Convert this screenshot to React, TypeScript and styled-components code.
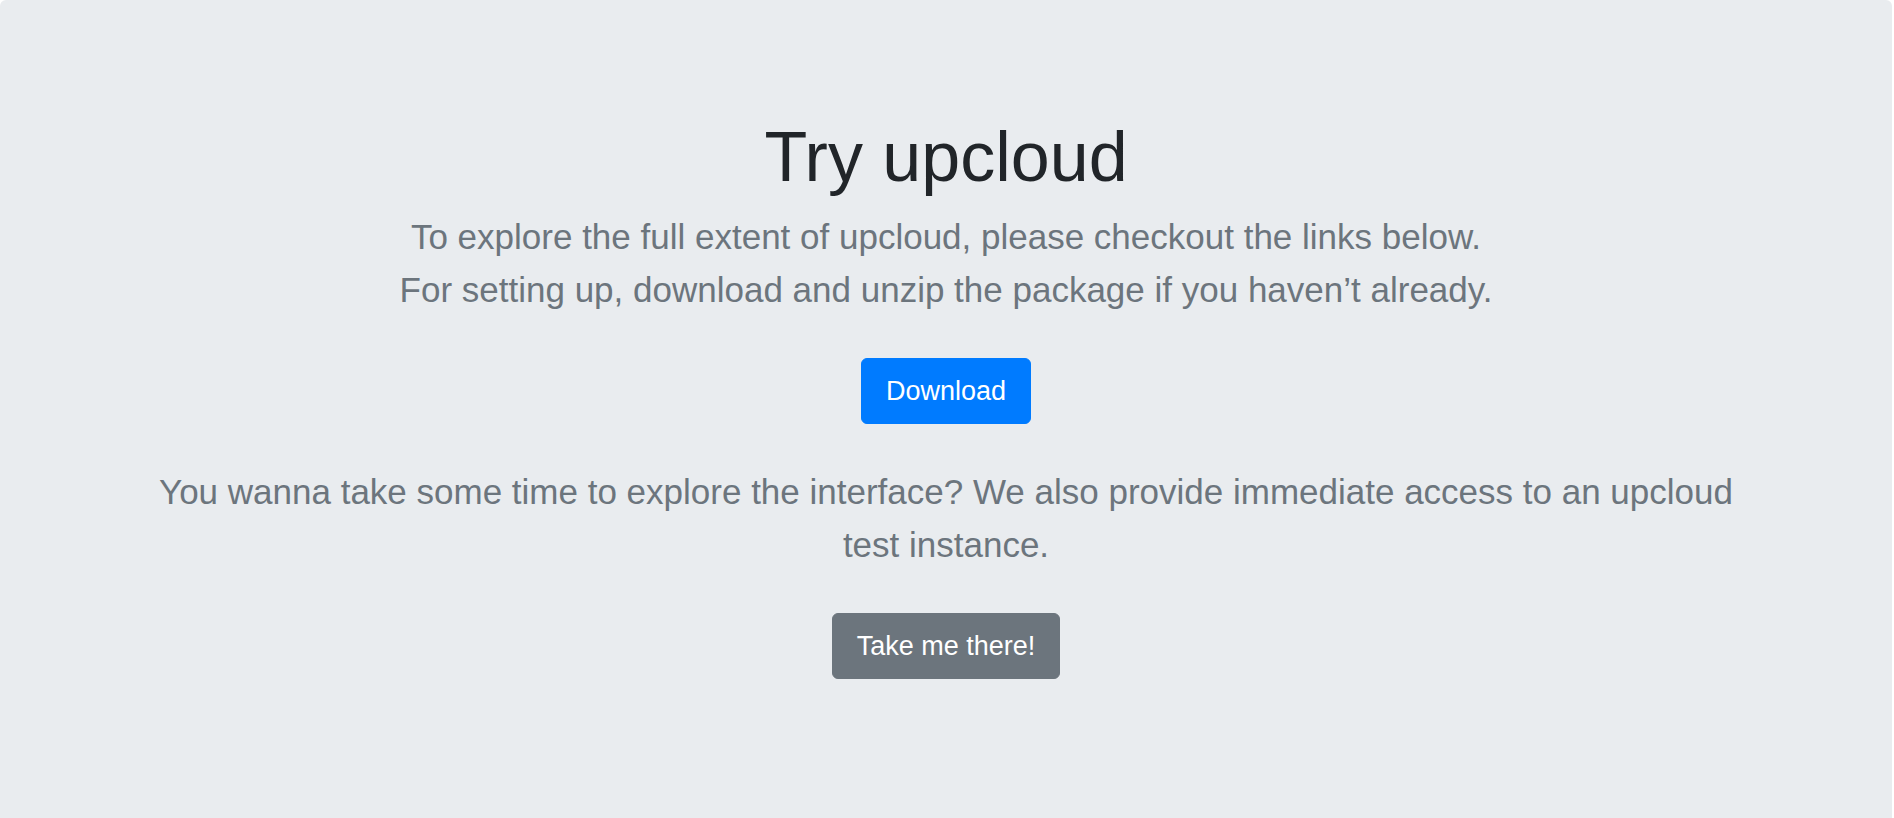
import React from 'react';
import styled, {createGlobalStyle} from 'styled-components';

const GlobalStyle = createGlobalStyle`
  html, body {
    margin: 0;
    padding: 0;
    background: #ffffff;
    font-family: "Liberation Sans", Arial, Helvetica, sans-serif;
  }
`;

export default function App(): JSX.Element {
  return (
    <>
      <GlobalStyle />
      <Jumbotron>
        <Inner>
          <Title>Try upcloud</Title>
          <Lead>
            To explore the full extent of upcloud, please checkout the links below.
            <br />
            For setting up, download and unzip the package if you haven’t already.
          </Lead>
          <Button variant="primary">Download</Button>
          <Lead>
            You wanna take some time to explore the interface? We also provide
            immediate access to an upcloud test instance.
          </Lead>
          <Button variant="secondary">Take me there!</Button>
        </Inner>
      </Jumbotron>
    </>
  );
}

const Jumbotron = styled.main`
  box-sizing: border-box;
  margin-right: 2px;
  min-height: 900px;
  padding: 115px 43px 86px;
  background: #e9ecef;
  border-radius: 6px;
`;

const Inner = styled.div`
  max-width: 1600px;
  margin: 0 auto;
  display: flex;
  flex-direction: column;
  align-items: center;
  text-align: center;
`;

const Title = styled.h1`
  margin: 0 0 11px;
  font-size: 70px;
  line-height: 84px;
  font-weight: 300;
  color: #212529;
`;

const Lead = styled.p`
  margin: 0 0 42px;
  font-size: 35px;
  line-height: 53px;
  font-weight: 300;
  color: #6c757d;
`;

type ButtonProps = {variant: 'primary' | 'secondary'};
const Button = styled.button<ButtonProps>`
  margin: 0 0 41px;
  padding: 12px 24px;
  font-family: inherit;
  font-size: 27px;
  line-height: 40px;
  color: #ffffff;
  border: 1px solid ${(p) => (p.variant === 'primary' ? '#007bff' : '#6c757d')};
  background: ${(p) => (p.variant === 'primary' ? '#007bff' : '#6c757d')};
  border-radius: 6px;
  cursor: pointer;
`;
